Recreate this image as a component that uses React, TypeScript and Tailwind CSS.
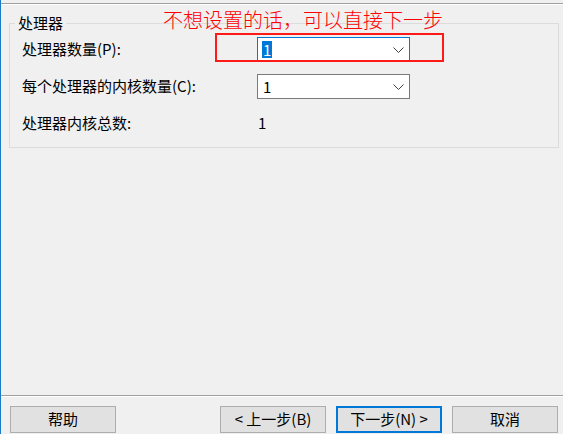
import React from 'react';

const font = { fontFamily: '"Noto Sans CJK SC", "Noto Sans", sans-serif' };

const Chevron = () => (
  <svg width="11" height="6" viewBox="0 0 11 6" className="shrink-0">
    <polyline points="0.5,0.5 5.5,5.5 10.5,0.5" fill="none" stroke="#404040" strokeWidth="1" />
  </svg>
);

const Combo = ({ focused }: { focused?: boolean }) => (
  <div
    className={
      'flex h-[25px] w-[153px] items-center justify-between bg-white pl-[4px] pr-[5px] border ' +
      (focused ? 'border-[#0078d7]' : 'border-[#7a7a7a]')
    }
  >
    {focused ? (
      <span className="flex h-[17px] items-center bg-[#0078d7] px-[1px] text-white leading-none">1</span>
    ) : (
      <span className="pl-[1px] leading-none">1</span>
    )}
    <Chevron />
  </div>
);

const Btn = ({ label, primary }: { label: string; primary?: boolean }) => (
  <button
    type="button"
    className={
      'flex h-[27px] w-[106px] items-center justify-center bg-[#e1e1e1] text-[15px] text-black ' +
      (primary ? 'border-2 border-[#0078d7]' : 'border border-[#adadad]')
    }
  >
    {label}
  </button>
);

export default function App() {
  return (
    <div
      className="relative flex h-[434px] w-[563px] flex-col overflow-hidden border-l border-[#1979ca] bg-[#f0f0f0] text-[15px] text-black"
      style={font}
    >
      <div className="mt-[3px] h-px bg-[#a0a0a0]" />
      <div className="h-px bg-white" />

      <div className="pl-[8px] pr-[4px]">
        <div className="relative mt-[18px] h-[125px] border border-[#dcdcdc] pl-[12px] pt-[13px]">
          <span className="absolute -top-[11px] left-[5px] bg-[#f0f0f0] px-[3px] leading-[20px]">处理器</span>
          <div className="grid grid-cols-[235px_153px] gap-y-[12px]">
            <div className="flex h-[25px] items-center">处理器数量(P):</div>
            <Combo focused />
            <div className="flex h-[25px] items-center">每个处理器的内核数量(C):</div>
            <Combo />
            <div className="flex h-[25px] items-center">处理器内核总数:</div>
            <div className="flex h-[25px] items-center pl-[1px]">1</div>
          </div>
        </div>
      </div>

      <div className="mt-auto h-px bg-[#a0a0a0]" />
      <div className="h-px bg-white" />
      <div className="flex gap-[10px] pb-[1px] pl-[9px] pt-[9px]">
        <Btn label="帮助" />
        <div className="ml-[94px] flex gap-[10px]">
          <Btn label="< 上一步(B)" />
          <Btn label="下一步(N) >" primary />
          <Btn label="取消" />
        </div>
      </div>

      <span className="absolute left-[162px] top-[8px] text-[20px] font-light leading-[24px] text-[#ff0000]">
        不想设置的话，可以直接下一步
      </span>
      <div className="absolute left-[214px] top-[33px] h-[29px] w-[229px] border-2 border-[#ff1a1a]" />
    </div>
  );
}
